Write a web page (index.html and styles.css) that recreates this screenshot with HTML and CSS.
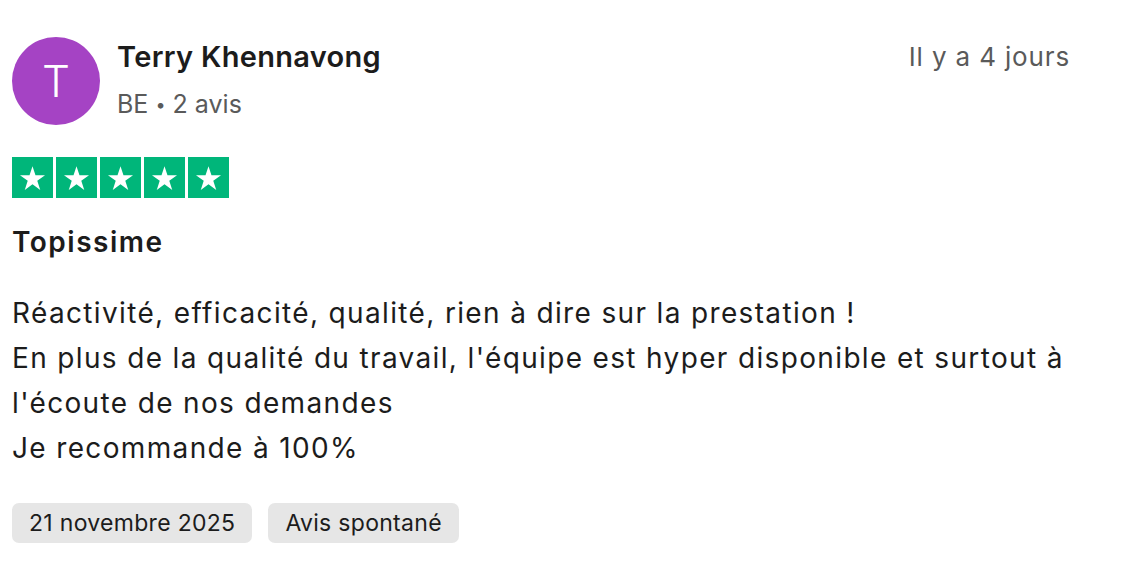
FILE: index.html
```html
<!DOCTYPE html>
<html lang="fr">
<head>
<meta charset="utf-8">
<link rel="stylesheet" href="styles.css">
</head>
<body>
<article class="review">
  <header class="head">
    <div class="avatar">T</div>
    <div class="who">
      <div class="name">Terry Khennavong</div>
      <div class="meta">BE <span class="dot">•</span> 2 avis</div>
    </div>
    <div class="when">Il y a 4 jours</div>
  </header>
  <div class="stars">
    <span class="star"><svg viewBox="0 0 24 24"><path d="M12 3.2l2.3 7.1h7.4l-6 4.3 2.3 7.1L12 17.3l-6 4.4 2.3-7.1-6-4.3h7.4z" fill="#fff"/></svg></span>
    <span class="star"><svg viewBox="0 0 24 24"><path d="M12 3.2l2.3 7.1h7.4l-6 4.3 2.3 7.1L12 17.3l-6 4.4 2.3-7.1-6-4.3h7.4z" fill="#fff"/></svg></span>
    <span class="star"><svg viewBox="0 0 24 24"><path d="M12 3.2l2.3 7.1h7.4l-6 4.3 2.3 7.1L12 17.3l-6 4.4 2.3-7.1-6-4.3h7.4z" fill="#fff"/></svg></span>
    <span class="star"><svg viewBox="0 0 24 24"><path d="M12 3.2l2.3 7.1h7.4l-6 4.3 2.3 7.1L12 17.3l-6 4.4 2.3-7.1-6-4.3h7.4z" fill="#fff"/></svg></span>
    <span class="star"><svg viewBox="0 0 24 24"><path d="M12 3.2l2.3 7.1h7.4l-6 4.3 2.3 7.1L12 17.3l-6 4.4 2.3-7.1-6-4.3h7.4z" fill="#fff"/></svg></span>
  </div>
  <h2 class="title">Topissime</h2>
  <p class="body">Réactivité, efficacité, qualité, rien à dire sur la prestation !<br>En plus de la qualité du travail, l'équipe est hyper disponible et surtout à l'écoute de nos demandes<br>Je recommande à 100%</p>
  <div class="tags">
    <span class="tag">21 novembre 2025</span>
    <span class="tag">Avis spontané</span>
  </div>
</article>
</body>
</html>
```

FILE: styles.css
```css
html, body { margin: 0; padding: 0; background: #fff; }
body { font-family: Inter, "Noto Sans", sans-serif; color: #1c1c1c; }
.review { width: 1058px; padding: 37px 0 0 12px; }
.head { display: flex; align-items: flex-start; }
.avatar { width: 88px; height: 88px; border-radius: 50%; background: #a543c4; color: #fff; font-size: 44px; font-weight: 300; display: flex; align-items: center; justify-content: center; flex: none; }
.who { margin-left: 17px; flex: 1; }
.name { font-size: 29px; font-weight: 600; line-height: 40px; letter-spacing: 0.3px; }
.meta { font-size: 25px; color: #5a5a5a; line-height: 34px; margin-top: 10px; }
.dot { font-size: 18px; vertical-align: 2px; }
.when { font-size: 26px; color: #5a5a5a; line-height: 40px; letter-spacing: 0.85px; }
.stars { display: flex; gap: 3px; margin-top: 32px; }
.star { width: 41px; height: 41px; background: #00b67a; display: flex; align-items: center; justify-content: center; }
.star svg { width: 31px; height: 31px; }
.title { font-size: 28px; font-weight: 600; margin: 26px 0 0; line-height: 36px; letter-spacing: 1.5px; }
.body { font-size: 28px; line-height: 45px; margin: 31px 0 0; width: 1070px; letter-spacing: 1.35px; }
.tags { display: flex; gap: 16px; margin-top: 32px; }
.tag { background: #e6e6e6; border-radius: 7px; height: 40px; line-height: 40px; padding: 0 17px; font-size: 23px; color: #1c1c1c; letter-spacing: 0.3px; }
```
